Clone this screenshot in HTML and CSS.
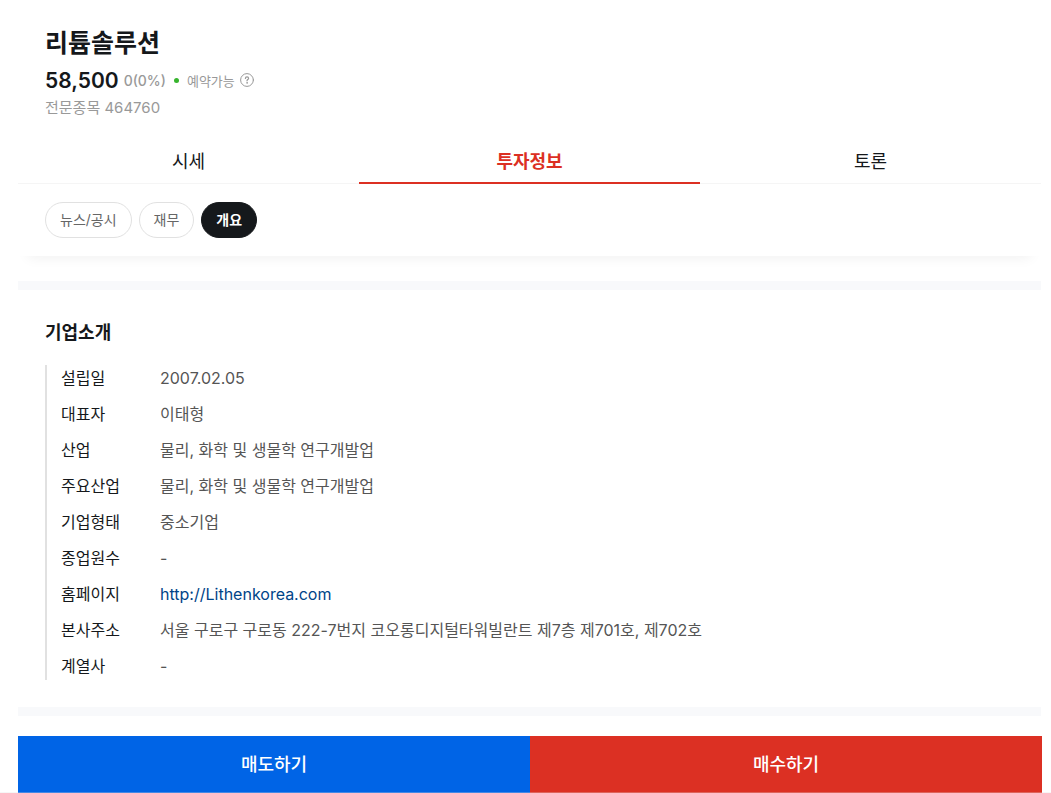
FILE: index.html
```html
<!DOCTYPE html>
<html lang="ko">
<head>
  <meta charset="UTF-8">
  <meta name="viewport" content="width=device-width, initial-scale=1.0">
  <title>리튬솔루션</title>
  <link rel="stylesheet" href="styles.css">
</head>
<body>
  <div class="container">
    <header class="header">
      <h1>리튬솔루션</h1>
      <div class="price-row">
        <strong class="price">58,500</strong>
        <span class="change">0(0%)</span>
        <span class="status">예약가능</span>
        <button class="help" type="button" aria-label="도움말">
          <svg width="14" height="14" viewBox="0 0 14 14" fill="none" stroke="#999" stroke-linecap="round">
            <circle cx="7" cy="7" r="6.4"/>
            <path d="M5.4 5.5C5.4 4.5 6.1 3.9 7 3.9s1.6.6 1.6 1.5c0 1.2-1.6 1.2-1.6 2.4" stroke-width="1.2"/>
            <circle cx="7" cy="9.9" r=".3"/>
          </svg>
        </button>
      </div>
      <p class="code">전문종목 464760</p>
    </header>

    <nav class="tabs">
      <a href="#price">시세</a>
      <a class="active" href="#info">투자정보</a>
      <a href="#talk">토론</a>
    </nav>

    <div class="chips">
      <button class="chip" type="button">뉴스/공시</button>
      <button class="chip" type="button">재무</button>
      <button class="chip active" type="button">개요</button>
    </div>

    <main class="section" id="info">
      <h2>기업소개</h2>
      <dl class="info">
        <dt>설립일</dt>
        <dd>2007.02.05</dd>
        <dt>대표자</dt>
        <dd>이태형</dd>
        <dt>산업</dt>
        <dd>물리, 화학 및 생물학 연구개발업</dd>
        <dt>주요산업</dt>
        <dd>물리, 화학 및 생물학 연구개발업</dd>
        <dt>기업형태</dt>
        <dd>중소기업</dd>
        <dt>종업원수</dt>
        <dd>-</dd>
        <dt>홈페이지</dt>
        <dd><a href="http://Lithenkorea.com">http://Lithenkorea.com</a></dd>
        <dt>본사주소</dt>
        <dd>서울 구로구 구로동 222-7번지 코오롱디지털타워빌란트 제7층 제701호, 제702호</dd>
        <dt>계열사</dt>
        <dd>-</dd>
      </dl>
    </main>
  </div>

  <div class="order-bar">
    <button class="sell" type="button">매도하기</button>
    <button class="buy" type="button">매수하기</button>
  </div>
</body>
</html>
```
FILE: styles.css
```css
* {
  box-sizing: border-box;
}
body {
  margin: 0;
  background-color: #fff;
  color: #15181b;
  font-family: Inter, "Noto Sans CJK KR", sans-serif;
}
h1, h2, p, dl, dd {
  margin: 0;
}
a {
  color: inherit;
  text-decoration: none;
}
button {
  border: none;
  padding: 0;
  background: none;
  font-family: inherit;
  cursor: pointer;
}
.container {
  margin: 0 10px 0 18px;
  padding-bottom: 77px;
}

/* 종목 정보 */
.header {
  padding: 25px 27px;
}
.header h1 {
  font-size: 25px;
  font-weight: 700;
  line-height: 36px;
}
.price-row {
  display: flex;
  align-items: center;
  height: 38px;
}
.price {
  font-size: 21px;
  font-weight: 600;
}
.change {
  margin-left: 5px;
  color: #999;
  font-size: 14px;
  font-weight: 500;
}
.status {
  display: flex;
  align-items: center;
  margin-left: 8px;
  color: #999;
  font-size: 13px;
}
.status::before {
  content: "";
  width: 5px;
  height: 5px;
  margin-right: 8px;
  border-radius: 50%;
  background-color: #37b42d;
}
.help {
  display: flex;
  margin-left: 5px;
}
.code {
  color: #999;
  font-size: 15px;
  line-height: 18px;
}

/* 탭 */
.tabs {
  display: flex;
  height: 42px;
  box-shadow: inset 0 -1px #f5f5f5;
}
.tabs a {
  flex: 1;
  border-bottom: 2px solid transparent;
  font-size: 18px;
  line-height: 40px;
  text-align: center;
}
.tabs .active {
  border-bottom-color: #dc3023;
  color: #dc3023;
  font-weight: 700;
}
.chips {
  display: flex;
  gap: 7px;
  padding: 18px 27px;
  box-shadow: 0 12px 12px -10px rgba(0, 0, 0, 0.06);
}
.chip {
  height: 36px;
  padding: 0 14px 3px;
  border: 1px solid #e1e1e1;
  border-radius: 18px;
  background-color: #fff;
  color: #666;
  font-size: 14px;
}
.chip.active {
  border-color: #15181b;
  background-color: #15181b;
  color: #fff;
  font-weight: 600;
}

/* 기업소개 */
.section {
  margin-top: 25px;
  padding: 28px 27px 27px;
  border-top: 9px solid #f8f9fb;
  border-bottom: 9px solid #f8f9fb;
}
.section h2 {
  margin-bottom: 17px;
  font-size: 18px;
  font-weight: 700;
  line-height: 30px;
}
.info {
  display: grid;
  grid-template-columns: 99px 1fr;
  row-gap: 9px;
  padding-left: 14px;
  border-left: 2px solid #e1e1e1;
  font-size: 16px;
  line-height: 27px;
}
.info dd {
  color: #555;
}
.info a {
  color: #004488;
}

/* 주문 버튼 */
.order-bar {
  position: fixed;
  right: 0;
  bottom: 0;
  left: 0;
  display: flex;
  padding: 0 9px 0 18px;
  background-color: #fff;
}
.order-bar::after {
  content: "";
  position: absolute;
  right: 0;
  bottom: 0;
  left: 0;
  height: 1px;
  background-color: rgba(225, 225, 225, 0.3);
}
.order-bar button {
  flex: 1;
  height: 57px;
  padding-bottom: 4px;
  color: #fff;
  font-size: 18px;
  font-weight: 500;
}
.order-bar .sell {
  background-color: #0064e6;
}
.order-bar .buy {
  background-color: #dc3023;
}
```
